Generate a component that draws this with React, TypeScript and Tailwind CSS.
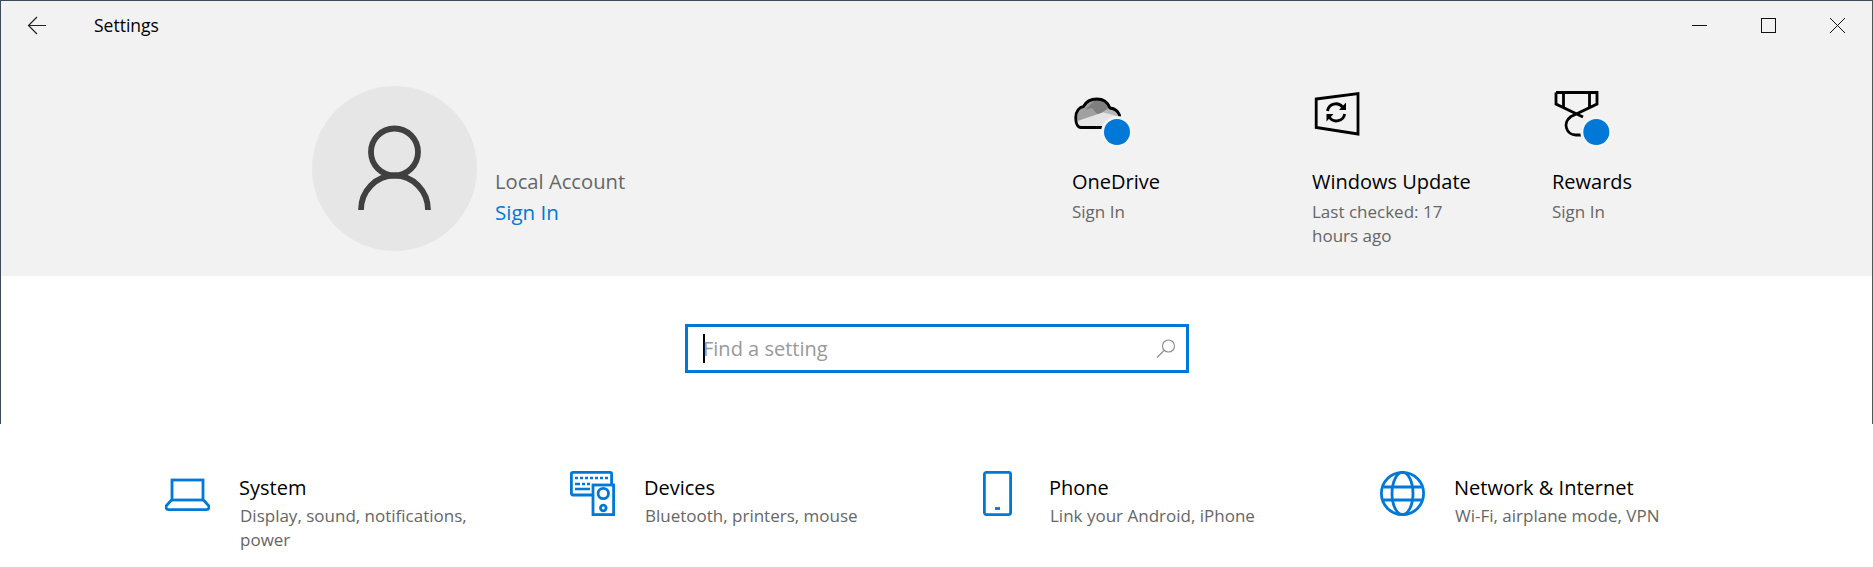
const tiles = [
  { name: "OneDrive", sub: "Sign In", icon: "cloud", width: "w-[240px]" },
  { name: "Windows Update", sub: "Last checked: 17 hours ago", icon: "update", width: "w-[240px]" },
  { name: "Rewards", sub: "Sign In", icon: "rewards", width: "w-[170px]" },
]

const categories = [
  { name: "System", sub: "Display, sound, notifications, power", icon: "laptop" },
  { name: "Devices", sub: "Bluetooth, printers, mouse", icon: "devices" },
  { name: "Phone", sub: "Link your Android, iPhone", icon: "phone" },
  { name: "Network & Internet", sub: "Wi-Fi, airplane mode, VPN", icon: "globe" },
]

function BlueDot({ cx }: { cx: number }) {
  return (
    <>
      <circle cx={cx} cy="44" r="16" fill="#f4f4f4" stroke="none" />
      <circle cx={cx} cy="44" r="13" fill="#0078d7" stroke="none" />
    </>
  )
}

function TileIcon({ icon }: { icon: string }) {
  if (icon === "cloud") {
    const outline = "M14 39.5H9C5.5 39.5 3.7 35 3.7 29.5C3.7 23 7.5 19 11.5 18.5C14 13.5 19.5 11 25 11C31.5 11 36 15 38 20C42 20.5 46 23 47.5 27V39.5Z"
    return (
      <svg width="60" height="60" viewBox="0 0 60 60">
        <clipPath id="cloud-clip">
          <path d={outline} />
        </clipPath>
        <g clipPath="url(#cloud-clip)">
          <rect width="60" height="60" fill="#a0a0a0" />
          <polygon points="31,24 38,19 48,24 48,29" fill="#b8b8b8" />
          <polygon points="13,22 25,10 38,19 26.3,27 19.7,20" fill="#7f7f7f" />
          <polygon points="4,33.5 31.3,24.3 48,28.7 48,41 4,41" fill="#e4e4e4" />
        </g>
        <path d={outline} fill="none" stroke="#000" strokeWidth="2.8" />
        <BlueDot cx={45} />
      </svg>
    )
  }
  if (icon === "update") {
    return (
      <svg width="60" height="60" viewBox="0 0 60 60" fill="none" stroke="#000">
        <polygon points="4.2,11 46,5.5 46,46 4.2,39.5" strokeWidth="2.8" />
        <path d="M15.5 23A8.5 8.5 0 0 1 30.5 19" strokeWidth="2.8" />
        <polygon points="34,14.5 34,22 27,22" fill="#000" stroke="none" />
        <path d="M32.7 26A8.5 8.5 0 0 1 17.5 29.5" strokeWidth="2.8" />
        <polygon points="14.5,33.5 14.5,26 21.5,26" fill="#000" stroke="none" />
      </svg>
    )
  }
  return (
    <svg width="60" height="60" viewBox="0 0 60 60" fill="none" stroke="#000" strokeWidth="2.8">
      <path d="M4 4.5H45V16L18 29M4 4.5V16L31 29" />
      <path d="M11.5 4.5V19.5M37.5 4.5V19.5" />
      <path d="M18.5 29A9.8 9.8 0 0 0 24 47H30" />
      <BlueDot cx={44.3} />
    </svg>
  )
}

function CategoryIcon({ icon }: { icon: string }) {
  if (icon === "laptop") {
    return (
      <svg width="45" height="45" viewBox="0 0 45 45" fill="none" stroke="#0078d7" strokeWidth="2.8">
        <rect x="7" y="9" width="31" height="20" />
        <path d="M6.5 29L1.5 34.5C0.5 36.5 1.2 38.6 3.5 38.6H41.5C43.8 38.6 44.5 36.5 43.5 34.5L38.5 29" />
      </svg>
    )
  }
  if (icon === "devices") {
    return (
      <svg width="45" height="45" viewBox="0 0 45 45" fill="none" stroke="#0078d7" strokeWidth="2.8">
        <path d="M22 24H3Q1.4 24 1.4 22V3Q1.4 1.4 3 1.4H40Q41.6 1.4 41.6 3V13" />
        <rect x="23" y="14" width="20.6" height="29.6" />
        <circle cx="33.3" cy="22.5" r="5.2" />
        <circle cx="33.3" cy="37" r="2.8" />
        <path d="M5 7H8M10 7H13M15 7H18M20 7H23M25 7H28M30 7H33M35 7H38M5 13H10M12 13H15M17 13H20M5 18H20" strokeWidth="2.4" />
      </svg>
    )
  }
  if (icon === "phone") {
    return (
      <svg width="45" height="45" viewBox="0 0 45 45" fill="none" stroke="#0078d7" strokeWidth="2.8">
        <rect x="9.4" y="1.4" width="26.2" height="42.2" rx="2" />
        <path d="M20 37.5H25" />
      </svg>
    )
  }
  return (
    <svg width="45" height="45" viewBox="0 0 45 45" fill="none" stroke="#0078d7" strokeWidth="2.8">
      <circle cx="22.5" cy="22.5" r="21.1" />
      <ellipse cx="22.5" cy="22.5" rx="10.5" ry="21.1" />
      <path d="M3.5 16H41.5M3.5 29H41.5" />
    </svg>
  )
}

export default function App() {
  return (
    <div className="relative h-[567px] w-full overflow-hidden bg-white font-['Open_Sans',sans-serif]">
      <div className="absolute left-0 top-0 h-px w-full bg-[#3d4a58]" />
      <div className="absolute left-0 top-0 h-[424px] w-px bg-[#3d4a58]" />
      <div className="absolute right-0 top-0 h-[424px] w-px bg-[#555555]" />

      <header className="h-[276px] bg-[#f2f2f2]">
        <div className="flex h-[51px] items-center">
          <button className="flex h-full w-[94px] items-center pl-[27px]">
            <svg width="20" height="20" viewBox="0 0 20 20" fill="none" stroke="#222" strokeWidth="1.2">
              <path d="M19 9.5H2M10 1L1.5 9.5L10 18" />
            </svg>
          </button>
          <span className="text-[17.5px] text-black">Settings</span>
          <div className="ml-auto mr-px flex h-full">
            <button className="flex w-[69px] items-center justify-center">
              <svg width="15" height="15" viewBox="0 0 15 15" stroke="#111" fill="none">
                <path d="M0 7.5H15" />
              </svg>
            </button>
            <button className="flex w-[69px] items-center justify-center">
              <svg width="15" height="15" viewBox="0 0 15 15" stroke="#111" fill="none">
                <rect x="0.5" y="0.5" width="14" height="14" />
              </svg>
            </button>
            <button className="flex w-[69px] items-center justify-center">
              <svg width="15" height="15" viewBox="0 0 15 15" stroke="#111" fill="none">
                <path d="M0 0L15 15M15 0L0 15" />
              </svg>
            </button>
          </div>
        </div>

        <div className="flex pl-[312px] pt-[35px]">
          <div className="flex w-[760px] items-start gap-[18px]">
            <div className="flex h-[165px] w-[165px] shrink-0 items-center justify-center rounded-full bg-[#e6e6e6]">
              <svg width="165" height="165" viewBox="0 0 165 165" fill="none" stroke="#404040" strokeWidth="5.8">
                <circle cx="82.5" cy="66" r="23.5" />
                <path d="M49 124A33.5 34.5 0 0 1 116 124" />
              </svg>
            </div>
            <div className="pt-[79px]">
              <p className="text-[20.2px] leading-[32px] text-[#666666]">Local Account</p>
              <p className="text-[20.5px] leading-[31px] text-[#0078d7]">Sign In</p>
            </div>
          </div>
          {tiles.map((tile) => (
            <div key={tile.name} className={`shrink-0 pt-[2px] ${tile.width}`}>
              <TileIcon icon={tile.icon} />
              <p className="mt-[18px] text-[20px] leading-[32px] text-black">{tile.name}</p>
              <p className="mt-[2px] max-w-[170px] text-[17px] leading-[24px] text-[#666666]">{tile.sub}</p>
            </div>
          ))}
        </div>
      </header>

      <div className="ml-[685px] mt-[48px] flex h-[49px] w-[504px] items-center border-[3px] border-[#0078d7] pl-[15px] pr-[10px]">
        <span className="h-[29px] w-[2px] bg-black" />
        <span className="-ml-[2px] text-[20px] text-[#999999]">Find a setting</span>
        <svg className="ml-auto" width="20" height="20" viewBox="0 0 20 20" fill="none" stroke="#8a8a8a" strokeWidth="1.1">
          <circle cx="12.5" cy="7" r="6" />
          <path d="M8 11.5L1 18.5" />
        </svg>
      </div>

      <div className="mt-[98px] grid grid-cols-[repeat(4,405px)] pl-[165px]">
        {categories.map((cat) => (
          <div key={cat.name} className="flex gap-[29px]">
            <div className="h-[45px] w-[45px] shrink-0">
              <CategoryIcon icon={cat.icon} />
            </div>
            <div className="max-w-[270px] pt-px">
              <p className="text-[20px] leading-[32px] text-black">{cat.name}</p>
              <p className="pl-px text-[17px] leading-[24px] text-[#666666]">{cat.sub}</p>
            </div>
          </div>
        ))}
      </div>
    </div>
  )
}
